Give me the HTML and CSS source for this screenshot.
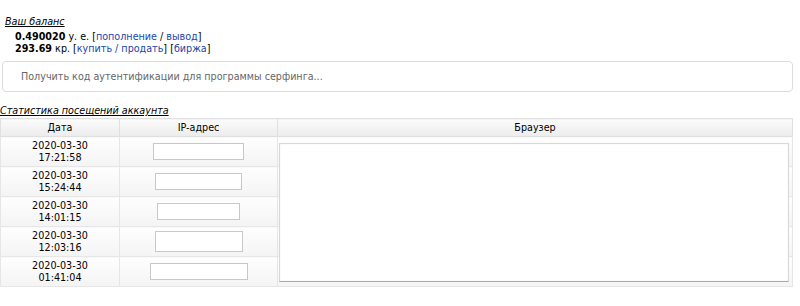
FILE: index.html
```html
<!DOCTYPE html>
<html lang="ru">
<head>
  <meta charset="UTF-8">
  <title>Аккаунт</title>
  <link rel="stylesheet" href="styles.css">
</head>
<body>
  <div class="balance">
    <div class="caption">Ваш баланс</div>
    <div class="line"><b>0.490020</b> у. е. [<a href="#">пополнение</a> / <a href="#">вывод</a>]</div>
    <div class="line"><b>293.69</b> кр. [<a href="#">купить / продать</a>] [<a href="#">биржа</a>]</div>
  </div>

  <input class="auth-code" type="text" placeholder="Получить код аутентификации для программы серфинга...">

  <div class="caption stats-caption">Статистика посещений аккаунта</div>
  <div class="stats">
    <table class="visits">
      <tr>
        <th class="col-date">Дата</th>
        <th class="col-ip">IP-адрес</th>
        <th>Браузер</th>
      </tr>
      <tr>
        <td>2020-03-30<br>17:21:58</td>
        <td><span class="ip ip-1"></span></td>
        <td class="br"></td>
      </tr>
      <tr>
        <td>2020-03-30<br>15:24:44</td>
        <td><span class="ip ip-2"></span></td>
        <td class="br"></td>
      </tr>
      <tr>
        <td>2020-03-30<br>14:01:15</td>
        <td><span class="ip ip-3"></span></td>
        <td class="br"></td>
      </tr>
      <tr>
        <td>2020-03-30<br>12:03:16</td>
        <td><span class="ip ip-4"></span></td>
        <td class="br"></td>
      </tr>
      <tr>
        <td>2020-03-30<br>01:41:04</td>
        <td><span class="ip ip-5"></span></td>
        <td class="br"></td>
      </tr>
    </table>
    <!-- панель браузера поверх колонки -->
    <div class="browser-box"></div>
  </div>
</body>
</html>
```

FILE: styles.css
```css
/* Общие стили */
body {
  margin: 0;
  font-family: "DejaVu Sans", Verdana, sans-serif;
  font-size: 9.6px;
  color: #000;
  background: #fff;
}
a {
  color: #2244aa;
  text-decoration: none;
}
.caption {
  font-style: italic;
  text-decoration: underline;
  line-height: 13px;
}
/* Баланс */
.balance {
  padding: 15px 0 0 5px;
}
.balance .caption {
  margin-bottom: 3px;
}
.balance .line {
  padding-left: 10px;
  line-height: 12px;
}
/* Поле кода */
.auth-code {
  display: block;
  box-sizing: border-box;
  width: 791px;
  height: 31px;
  margin: 6px 0 0 2px;
  padding: 0 18px;
  border: 1px solid #dcdcdc;
  border-radius: 4px;
  font-family: "DejaVu Sans", Verdana, sans-serif;
  font-size: 9.6px;
  color: #555;
}
.auth-code::placeholder {
  color: #666;
}
.stats-caption {
  margin-top: 12px;
}
/* Таблица посещений */
.stats {
  position: relative;
  margin-top: 1px;
  width: 793px;
}
.visits {
  width: 793px;
  border-collapse: collapse;
  border: 1px solid #e2e2e2;
}
.visits th {
  height: 17px;
  padding: 0;
  font-weight: normal;
  background: linear-gradient(#fbfbfb, #ececec);
  border: 1px solid #e0e0e0;
}
.visits td {
  height: 29px;
  padding: 0;
  text-align: center;
  line-height: 12px;
  border: 1px solid #e6e6e6;
  background: linear-gradient(#fefefe, #f4f4f4);
}
.col-date {
  width: 118px;
}
.col-ip {
  width: 157px;
}
.ip {
  display: inline-block;
  vertical-align: middle;
  height: 15px;
  border: 1px solid #c8c8c8;
  background: #fff;
}
.ip-1 { width: 89px; }
.ip-2 { width: 85px; }
.ip-3 { width: 81px; }
.ip-4 { width: 86px; height: 19px; }
.ip-5 { width: 96px; }
.browser-box {
  position: absolute;
  left: 279px;
  top: 25px;
  width: 508px;
  height: 137px;
  background: #fff;
  border: 1px solid #d8d8d8;
  border-bottom-color: #aaa;
  box-shadow: inset 0 0 2px #eee;
}
```
